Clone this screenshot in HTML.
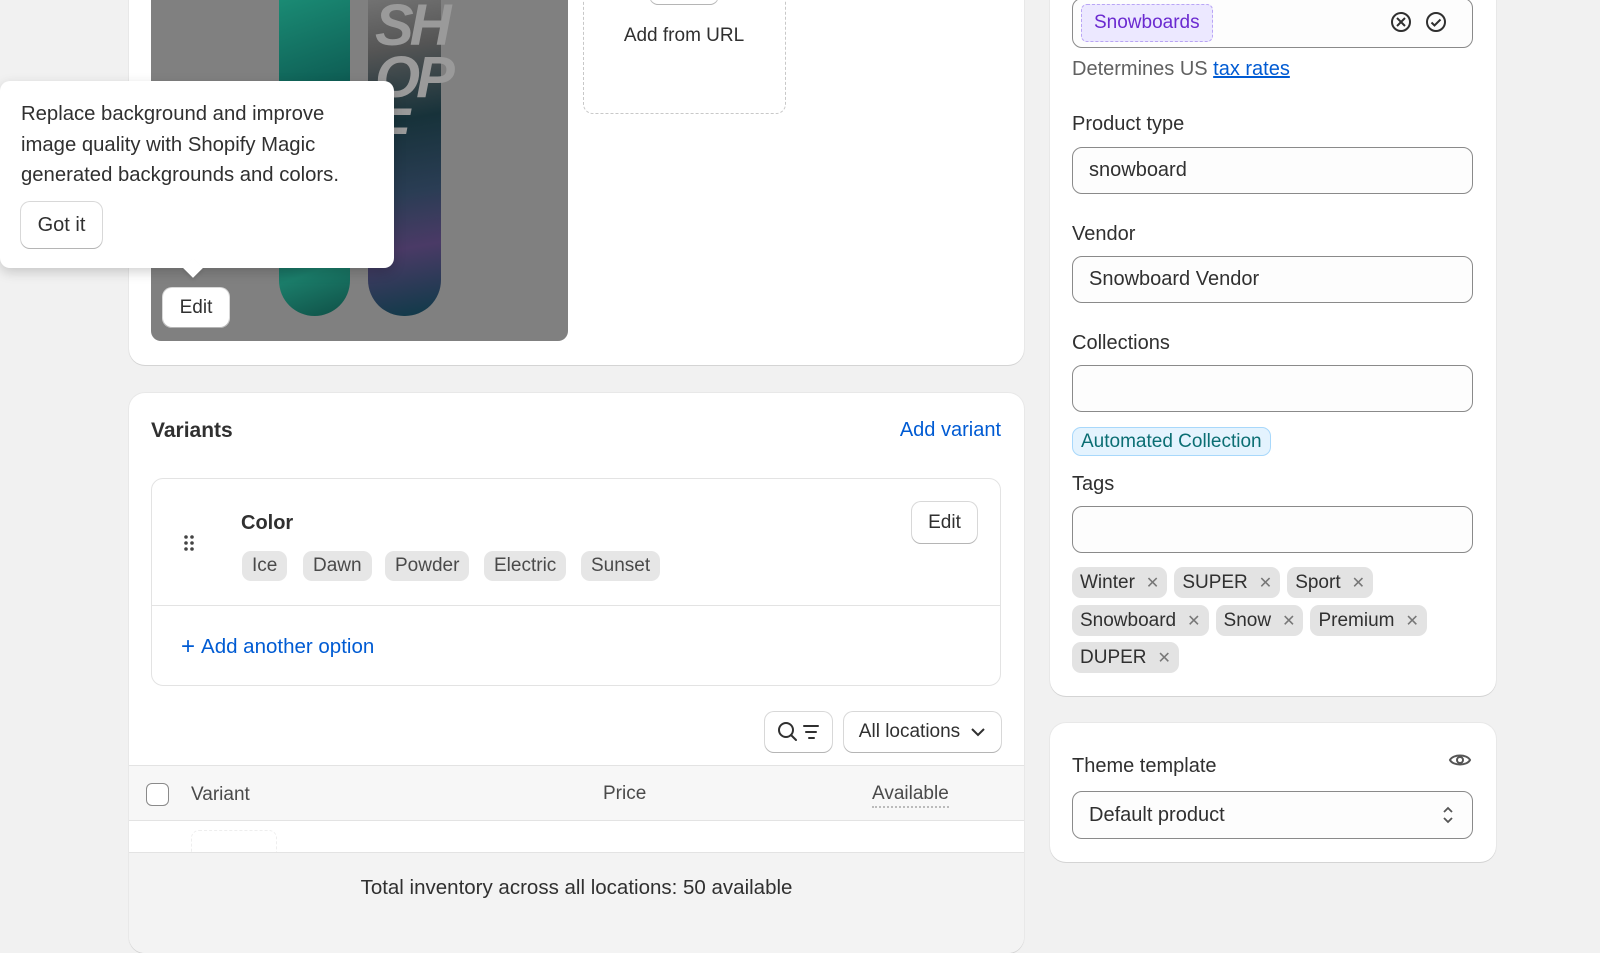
<!DOCTYPE html>
<html><head><meta charset="utf-8"><style>
*{box-sizing:border-box;margin:0;padding:0}
body{width:1600px;height:900px;overflow:hidden;background:#f1f1f1;font-family:"Liberation Sans",sans-serif;color:#303030;position:relative;font-size:18px}
.abs{position:absolute}
.card{position:absolute;background:#fff;border-radius:16px;box-shadow:0 1px 0 #d4d4d4,0 0 0 1px #e8e8e8}
.btn{position:absolute;background:#fff;border-radius:9px;box-shadow:0 1px 0 #b5b5b5,0 0 0 1px #d8d8d8;display:flex;align-items:center;justify-content:center;font-size:19px;color:#303030}
.inp{position:absolute;left:1072px;width:401px;border:1.5px solid #8a8a8a;border-radius:10px;background:#fdfdfd;font-size:20px;padding-left:16px;display:flex;align-items:center}
.lbl{position:absolute;left:1072px;font-size:20px;color:#303030}
.pill{position:absolute;height:30px;background:#e6e6e6;border-radius:9px;font-size:19px;display:flex;align-items:center;padding:0 10px;color:#4a4a4a}
.trow{position:absolute;left:1072px;display:flex;gap:7px}
.tag{height:31px;background:#e3e3e3;border-radius:9px;font-size:19px;display:flex;align-items:center;padding:0 8px;color:#303030}
.tag span{margin-left:11px;color:#777;font-size:16px}
</style></head><body>

<div class="card" style="left:129px;top:-30px;width:895px;height:395px"></div>
<div class="abs" style="left:151px;top:0;width:417px;height:341px;background:#808080;border-radius:0 0 10px 10px;overflow:hidden">
  <div class="abs" style="left:128px;top:-40px;width:71px;height:356px;border-radius:0 0 36px 36px;background:linear-gradient(160deg,#1f9c80 0%,#0d5a52 40%,#114a4a 60%,#1b7d6a 85%,#0f4f46 100%)"></div>
  <div class="abs" style="left:217px;top:-40px;width:73px;height:356px;border-radius:0 0 36px 36px;background:linear-gradient(170deg,#888 0%,#555 25%,#17323a 45%,#2a3d54 65%,#4a3a66 80%,#0e3a48 100%)"></div>
  <div class="abs" style="left:224px;top:0;font:italic bold 58px 'Liberation Sans';color:#9a9a9a;line-height:52px;letter-spacing:-4px">SH<br>OP<br>F</div>
</div>
<div class="abs" style="left:583px;top:-20px;width:203px;height:134px;border:1px dashed #c8c8c8;border-radius:10px"></div>
<div class="btn" style="left:650px;top:-12px;width:68px;height:16px"></div>
<div class="abs" style="left:584px;top:25px;width:200px;text-align:center;font-size:19px">Add from URL</div>

<div class="btn" style="left:163px;top:288px;width:66px;height:39px">Edit</div>

<div class="abs" style="left:0;top:81px;width:394px;height:187px;background:#fff;border-radius:10px;box-shadow:0 4px 12px rgba(0,0,0,.18)"></div>
<div class="abs" style="left:186px;top:261px;width:14px;height:14px;background:#fff;transform:rotate(45deg);box-shadow:2px 2px 3px rgba(0,0,0,.08)"></div>
<div class="abs" style="left:21px;top:99px;font-size:20.3px;line-height:30.5px;color:#303030">Replace background and improve<br>image quality with Shopify Magic<br>generated backgrounds and colors.</div>
<div class="btn" style="left:21px;top:202px;width:81px;height:46px;font-size:20px">Got it</div>

<div class="card" style="left:129px;top:393px;width:895px;height:560px;overflow:hidden">
  <div class="abs" style="left:22px;top:26px;font-size:21px;font-weight:bold">Variants</div>
  <div class="abs" style="right:23px;top:26px;font-size:20px;color:#005bd3">Add variant</div>
  <div class="abs" style="left:22px;top:85px;width:850px;height:208px;border:1px solid #e3e3e3;border-radius:12px">
    <div class="abs" style="left:89px;top:33px;font-size:20px;font-weight:bold">Color</div>
    <svg class="abs" style="left:31px;top:55px" width="12" height="18"><g fill="#444"><circle cx="3" cy="3" r="1.8"/><circle cx="9" cy="3" r="1.8"/><circle cx="3" cy="9" r="1.8"/><circle cx="9" cy="9" r="1.8"/><circle cx="3" cy="15" r="1.8"/><circle cx="9" cy="15" r="1.8"/></g></svg>
    <div class="pill" style="left:90px;top:72px">Ice</div>
    <div class="pill" style="left:151px;top:72px">Dawn</div>
    <div class="pill" style="left:233px;top:72px">Powder</div>
    <div class="pill" style="left:332px;top:72px">Electric</div>
    <div class="pill" style="left:429px;top:72px">Sunset</div>
    <div class="btn" style="left:760px;top:23px;width:65px;height:41px">Edit</div>
    <div class="abs" style="left:0;top:126px;width:100%;border-top:1px solid #e3e3e3"></div>
    <div class="abs" style="left:29px;top:154px;font-size:20.5px;color:#005bd3"><b style="font-weight:normal;font-size:24px;margin-right:6px;vertical-align:-1px">+</b>Add another option</div>
  </div>
  <div class="btn" style="left:636px;top:319px;width:67px;height:40px">
    <svg width="44" height="22"><circle cx="9" cy="9" r="7" fill="none" stroke="#303030" stroke-width="2"/><path d="M14 14l5 5M27 5h14M29 11h10M32 17h5" stroke="#303030" stroke-width="2" stroke-linecap="round"/></svg>
  </div>
  <div class="btn" style="left:715px;top:319px;width:157px;height:40px;font-size:19px">All locations <svg width="16" height="10" style="margin-left:10px"><path d="M2 2l6 6 6-6" fill="none" stroke="#303030" stroke-width="2"/></svg></div>
  <div class="abs" style="left:0;top:372px;width:100%;height:56px;background:#f7f7f7;border-top:1px solid #e3e3e3;border-bottom:1px solid #e3e3e3"></div>
  <div class="abs" style="left:17px;top:390px;width:23px;height:23px;border:1.5px solid #8a8a8a;border-radius:6px;background:#fff"></div>
  <div class="abs" style="left:62px;top:391px;font-size:19px;color:#4a4a4a">Variant</div>
  <div class="abs" style="left:474px;top:390px;font-size:19px;color:#4a4a4a">Price</div>
  <div class="abs" style="left:743px;top:390px;font-size:19px;color:#4a4a4a;border-bottom:2px dotted #bbb;padding-bottom:1px">Available</div>
  <div class="abs" style="left:62px;top:437px;width:86px;height:30px;border:1px dashed #eee;border-radius:8px"></div>
  <div class="abs" style="left:0;top:459px;width:100%;height:120px;background:#f3f3f3;border-top:1px solid #e3e3e3"></div>
  <div class="abs" style="left:0;top:483px;width:100%;text-align:center;font-size:20.5px">Total inventory across all locations: 50 available</div>
</div>

<div class="card" style="left:1050px;top:-30px;width:446px;height:726px"></div>
<div class="inp" style="top:-2px;height:50px;padding-left:8px">
  <div style="background:#ece8ff;border:1.5px dashed #b9a5f5;border-radius:6px;color:#6b2ad0;height:38px;padding:0 12px;display:flex;align-items:center;font-size:19px">Snowboards</div>
  <svg class="abs" style="right:60px;top:12px" width="22" height="22"><circle cx="11" cy="11" r="9" fill="none" stroke="#303030" stroke-width="2"/><path d="M7 7l8 8M15 7l-8 8" stroke="#303030" stroke-width="2"/></svg>
  <svg class="abs" style="right:25px;top:12px" width="22" height="22"><circle cx="11" cy="11" r="9" fill="none" stroke="#303030" stroke-width="2"/><path d="M6.5 11.5l3 3 6-6" fill="none" stroke="#303030" stroke-width="2"/></svg>
</div>
<div class="abs" style="left:1072px;top:58px;font-size:20px;color:#616161">Determines US <span style="color:#005bd3;text-decoration:underline">tax rates</span></div>
<div class="lbl" style="top:113px">Product type</div>
<div class="inp" style="top:147px;height:47px">snowboard</div>
<div class="lbl" style="top:223px">Vendor</div>
<div class="inp" style="top:256px;height:47px">Snowboard Vendor</div>
<div class="lbl" style="top:332px">Collections</div>
<div class="inp" style="top:365px;height:47px"></div>
<div class="abs" style="left:1072px;top:427px;height:29px;padding:0 8px;background:#e4f3fe;border:1.5px solid #a8d8fb;border-radius:9px;color:#0b6e73;font-size:19px;display:flex;align-items:center">Automated Collection</div>
<div class="lbl" style="top:473px">Tags</div>
<div class="inp" style="top:506px;height:47px"></div>
<div class="trow" style="top:567px"><div class="tag">Winter<span>✕</span></div><div class="tag">SUPER<span>✕</span></div><div class="tag">Sport<span>✕</span></div></div>
<div class="trow" style="top:605px"><div class="tag">Snowboard<span>✕</span></div><div class="tag">Snow<span>✕</span></div><div class="tag">Premium<span>✕</span></div></div>
<div class="trow" style="top:642px"><div class="tag">DUPER<span>✕</span></div></div>

<div class="card" style="left:1050px;top:723px;width:446px;height:139px"></div>
<div class="lbl" style="top:755px">Theme template</div>
<svg class="abs" style="left:1448px;top:751px" width="24" height="18"><path d="M2 9C5 3 19 3 22 9 19 15 5 15 2 9Z" fill="none" stroke="#555" stroke-width="2"/><circle cx="12" cy="9" r="3" fill="none" stroke="#555" stroke-width="2"/></svg>
<div class="inp" style="top:791px;height:48px">Default product
  <svg class="abs" style="right:18px;top:13px" width="12" height="20"><path d="M2 7l4-4 4 4M2 13l4 4 4-4" fill="none" stroke="#555" stroke-width="1.8"/></svg>
</div>
</body></html>
